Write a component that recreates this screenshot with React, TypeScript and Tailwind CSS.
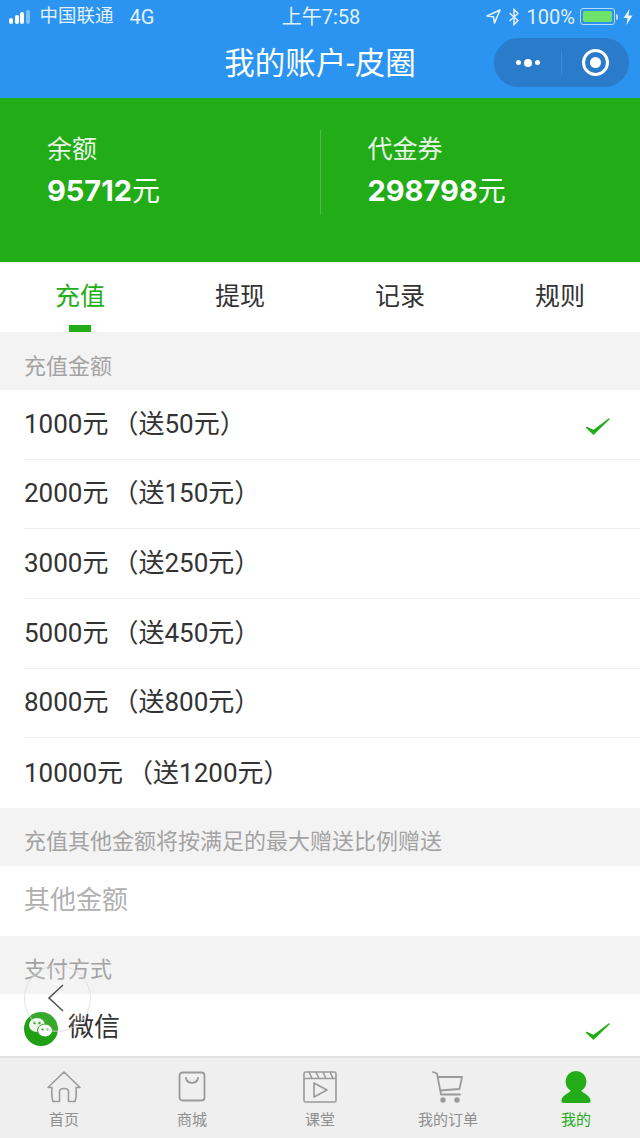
import React from 'react';

const font = '[font-family:"Roboto","Noto_Sans_CJK_SC",sans-serif]';

const amounts = [
  ['1000元', '送50元'],
  ['2000元', '送150元'],
  ['3000元', '送250元'],
  ['5000元', '送450元'],
  ['8000元', '送800元'],
  ['10000元', '送1200元'],
];

const Check = () => (
  <svg width="26" height="20" viewBox="0 0 26 20" fill="none" className="text-[#21ac18] mt-[6px]">
    <path d="M1.5 10.5 L8.5 17 L24 2 L8.7 13.6 Z" fill="currentColor" stroke="currentColor" strokeWidth="1.4" strokeLinejoin="round" />
  </svg>
);

const StatusBar = () => (
  <div className="flex items-center justify-between h-[33px] pl-[9px] pr-[7px] text-[18.5px] text-[#e3f0fd]">
    <div className="flex items-center w-[200px]">
      <div className="flex items-end gap-[1.5px] h-[14px] mr-[10px]">
        <span className="w-[4px] h-[6px] rounded-[2px] bg-white" />
        <span className="w-[4px] h-[9px] rounded-[2px] bg-white" />
        <span className="w-[4px] h-[12px] rounded-[2px] bg-white" />
        <span className="w-[4px] h-[14px] rounded-[2px] bg-white/40" />
      </div>
      <span>中国联通</span>
      <span className="ml-[16px] text-[20px]">4G</span>
    </div>
    <span className="text-[20px]">上午7:58</span>
    <div className="flex items-center justify-end w-[200px]">
      <svg width="15" height="15" viewBox="0 0 15 15" className="mr-[7px]">
        <path d="M14 1 L1 7 L7.5 7.8 L8.5 14 Z" fill="none" stroke="#e3f0fd" strokeWidth="1.6" strokeLinejoin="round" />
      </svg>
      <svg width="12" height="18" viewBox="0 0 12 18" fill="none" stroke="#e3f0fd" strokeWidth="1.5" className="mr-[7px]">
        <path d="M1.5 5 L10 12.5 L6 16.5 V1.5 L10 5.5 L1.5 13" />
      </svg>
      <span className="text-[20px]">100%</span>
      <div className="ml-[5px] w-[35px] h-[17px] rounded-[3px] border border-[#b7daf8] p-[2px]">
        <div className="w-full h-full rounded-[2px] bg-[#6fe26c]" />
      </div>
      <span className="ml-[1px] w-[2px] h-[6px] rounded-r-sm bg-[#b7daf8]" />
      <svg width="10" height="16" viewBox="0 0 10 16" className="ml-[5px]">
        <path d="M6.5 0 L0.5 9 H4.5 L3.5 16 L9.5 6.5 H5.5 Z" fill="#eef6fe" />
      </svg>
    </div>
  </div>
);

const NavBar = () => (
  <div className="relative flex items-center justify-center h-[65px] pb-[3px]">
    <span className="text-[30.5px] leading-none text-white">我的账户-皮圈</span>
    <div className="absolute right-[11px] top-[5px] flex items-center w-[135px] h-[49px] rounded-full bg-[#2a7ccb]">
      <div className="flex items-center justify-center gap-[3px] w-[67px]">
        <span className="w-[5px] h-[5px] rounded-full bg-white" />
        <span className="w-[8px] h-[8px] rounded-full bg-white" />
        <span className="w-[5px] h-[5px] rounded-full bg-white" />
      </div>
      <span className="w-px h-[24px] bg-white/10" />
      <div className="flex items-center justify-center flex-1">
        <div className="flex items-center justify-center w-[27px] h-[27px] rounded-full border-[3px] border-white">
          <span className="w-[11px] h-[11px] rounded-full bg-white" />
        </div>
      </div>
    </div>
  </div>
);

const Balance = ({ label, value }: { label: string; value: string }) => (
  <div className="flex-1 pl-[47px]">
    <div className="text-[25px] leading-[36px] text-[#e8f6e6]">{label}</div>
    <div className="mt-[5px] text-[29px] leading-[36px] font-bold text-white [font-family:'Inter','Noto_Sans_CJK_SC',sans-serif]">
      {value}
      <span className="text-[28px] font-normal">元</span>
    </div>
  </div>
);

const Tabs = () => (
  <div className="flex h-[70px] bg-white">
    {['充值', '提现', '记录', '规则'].map((t, i) => (
      <div key={t} className="relative flex-1 flex justify-center pt-[17px]">
        <span className={`text-[25px] leading-[36px] ${i === 0 ? 'text-[#21ac18]' : 'text-[#333333]'}`}>{t}</span>
        {i === 0 && <span className="absolute bottom-0 w-[22px] h-[7px] bg-[#21ac18]" />}
      </div>
    ))}
  </div>
);

const SectionTitle = ({ text }: { text: string }) => (
  <div className="flex items-center h-[58px] pl-[24px] pt-[10px] bg-[#f3f3f3] text-[22px] text-[#a3a3a3]">{text}</div>
);

const TabIcon = ({ children, label, active }: { children: React.ReactNode; label: string; active?: boolean }) => (
  <div className="flex-1 flex flex-col items-center pt-[12px]">
    <div className="flex items-center justify-center h-[34px]">{children}</div>
    <span className={`mt-[5px] text-[15px] leading-[22px] ${active ? 'text-[#21ac18]' : 'text-[#8e8e8e]'}`}>{label}</span>
  </div>
);

const BottomBar = () => (
  <div className="flex h-[82px] px-0 border-t-2 border-[#e2e2e2] bg-[#efefef]">
    <TabIcon label="首页">
      <svg width="34" height="32" viewBox="0 0 34 32" fill="none" stroke="#9a9a9a" strokeWidth="1.6" strokeLinejoin="round">
        <path d="M1 16.5 L17 1 L33 16.5 L29 16.5 C29.5 22 29.5 26 28 30.5 L21.5 30.5 L21.5 20.5 C21.5 16.5 12.5 16.5 12.5 20.5 L12.5 30.5 L6 30.5 C4.5 26 4.5 22 5 16.5 Z" />
      </svg>
    </TabIcon>
    <TabIcon label="商城">
      <svg width="28" height="32" viewBox="0 0 28 32" fill="none" stroke="#9a9a9a" strokeWidth="1.8">
        <rect x="1.5" y="1.5" width="25" height="28" rx="3" />
        <path d="M8 7 C9 13.5 19 13.5 20 7" strokeLinecap="round" />
      </svg>
    </TabIcon>
    <TabIcon label="课堂">
      <svg width="34" height="32" viewBox="0 0 34 32" fill="none" stroke="#9a9a9a" strokeWidth="1.6">
        <rect x="1" y="1" width="32" height="30" rx="1.5" />
        <path d="M1 7.5 H33 M6 1 L9 7.5 M13 1 L16 7.5 M20 1 L23 7.5 M27 1 L30 7.5" />
        <path d="M11 12 L24 19 L11 26 Z" strokeLinejoin="round" />
      </svg>
    </TabIcon>
    <TabIcon label="我的订单">
      <svg width="32" height="32" viewBox="0 0 32 32" fill="none" stroke="#9a9a9a" strokeWidth="1.8" strokeLinejoin="round">
        <path d="M1 1 L5 2.5 L9 23.5 H28" strokeLinecap="round" />
        <path d="M6 6 H30 L27.5 18 L8 19.5" />
        <circle cx="11" cy="29" r="1.8" fill="#9a9a9a" />
        <circle cx="25" cy="29" r="1.8" fill="#9a9a9a" />
      </svg>
    </TabIcon>
    <TabIcon label="我的" active>
      <svg width="30" height="32" viewBox="0 0 30 32" fill="#21ac18">
        <circle cx="15" cy="10.5" r="10.5" />
        <path d="M10 19 C8 23 2 23 0.5 29 C0 31 1 32 3 32 H27 C29 32 30 31 29.5 29 C28 23 22 23 20 19 Z" />
      </svg>
    </TabIcon>
  </div>
);

const App = () => {
  return (
    <div className={`relative flex flex-col w-[640px] h-[1138px] overflow-hidden bg-[#f3f3f3] ${font}`}>
      <div className="h-[98px] bg-[#2a94f0]">
        <StatusBar />
        <NavBar />
      </div>

      <div className="flex h-[164px] pt-[34px] bg-[#21ac18]">
        <Balance label="余额" value="95712" />
        <div className="w-px h-[85px] -mt-[2px] bg-white/20" />
        <Balance label="代金券" value="298798" />
      </div>

      <Tabs />
      <SectionTitle text="充值金额" />

      <div className="bg-white pl-[24px]">
        {amounts.map((a, i) => (
          <div key={a[0]} className={`flex items-center justify-between h-[69.67px] pr-[29px] text-[26px] text-[#333333] ${i < amounts.length - 1 ? 'border-b border-[#eeeeee]' : ''}`}>
            <span>
              {a[0]}
              <span className="ml-[4px]">（</span>
              {a[1]}
              ）
            </span>
            {i === 0 && <Check />}
          </div>
        ))}
      </div>

      <SectionTitle text="充值其他金额将按满足的最大赠送比例赠送" />
      <div className="flex items-center h-[70px] pl-[24px] bg-white text-[26px] text-[#b0b0b0]">其他金额</div>
      <SectionTitle text="支付方式" />

      <div className="flex items-center justify-between h-[62px] pl-[24px] pr-[29px] pt-[9px] bg-white">
        <div className="flex items-center gap-[10px]">
          <svg width="34" height="34" viewBox="0 0 34 34">
            <circle cx="17" cy="17" r="17" fill="#21a016" />
            <ellipse cx="13" cy="13" rx="8" ry="7" fill="#eef6ec" />
            <ellipse cx="21" cy="18.5" rx="7.5" ry="6.5" fill="#ffffff" stroke="#21a016" strokeWidth="1" />
            <circle cx="10.5" cy="11" r="1.2" fill="#21a016" />
            <circle cx="15.5" cy="11" r="1.2" fill="#21a016" />
            <circle cx="18.5" cy="17.5" r="1.1" fill="#21a016" />
            <circle cx="23.5" cy="17.5" r="1.1" fill="#21a016" />
          </svg>
          <span className="text-[26px] -mt-[4px] text-[#333333]">微信</span>
        </div>
        <Check />
      </div>

      <BottomBar />

      {/* floating back button */}
      <div className="absolute left-[24px] top-[965px] flex items-center justify-center w-[67px] h-[67px] rounded-full border border-[#d8d8d8]/70 bg-white/10">
        <svg width="18" height="28" viewBox="0 0 18 28" fill="none" stroke="#555555" strokeWidth="1.6" className="-ml-[4px] -mt-[2px]">
          <path d="M16 1 L2 14 L16 27" />
        </svg>
      </div>
    </div>
  );
};

export default App;
